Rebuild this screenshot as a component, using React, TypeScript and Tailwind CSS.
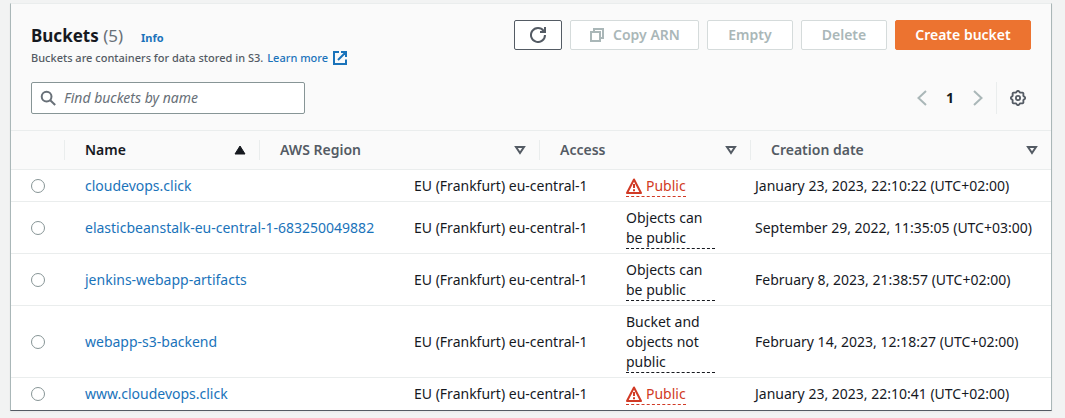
import React from 'react';
import clsx from 'clsx';

type Access = 'Public' | 'Objects can be public' | 'Bucket and objects not public';

interface Bucket {
  name: string;
  region: string;
  access: Access;
  created: string;
}

const FRANKFURT = 'EU (Frankfurt) eu-central-1';

const buckets: Bucket[] = [
  { name: 'cloudevops.click', region: FRANKFURT, access: 'Public', created: 'January 23, 2023, 22:10:22 (UTC+02:00)' },
  { name: 'elasticbeanstalk-eu-central-1-683250049882', region: FRANKFURT, access: 'Objects can be public', created: 'September 29, 2022, 11:35:05 (UTC+03:00)' },
  { name: 'jenkins-webapp-artifacts', region: FRANKFURT, access: 'Objects can be public', created: 'February 8, 2023, 21:38:57 (UTC+02:00)' },
  { name: 'webapp-s3-backend', region: FRANKFURT, access: 'Bucket and objects not public', created: 'February 14, 2023, 12:18:27 (UTC+02:00)' },
  { name: 'www.cloudevops.click', region: FRANKFURT, access: 'Public', created: 'January 23, 2023, 22:10:41 (UTC+02:00)' },
];

const columns = ['Name', 'AWS Region', 'Access', 'Creation date'];

function Icon({ children, className }: { children: React.ReactNode; className?: string }) {
  return (
    <svg viewBox="0 0 16 16" fill="none" stroke="currentColor" strokeWidth="2" aria-hidden="true" className={clsx('shrink-0', className ?? 'size-4')}>
      {children}
    </svg>
  );
}

const RefreshIcon = () => (
  <Icon>
    <path d="M15 8A7 7 0 1 1 13.6 3.8L15 5" />
    <path d="M15 0v5h-5" />
  </Icon>
);

const CopyIcon = () => (
  <Icon>
    <path d="M2 5h9v9H2z" />
    <path d="M5 5V2h9v9h-3" />
  </Icon>
);

const SearchIcon = () => (
  <Icon className="size-4 text-[#687078]">
    <circle cx="6.6" cy="6.6" r="4.9" />
    <path d="m10.2 10.2 5 4.8" />
  </Icon>
);

const ExternalIcon = () => (
  <Icon>
    <path d="M7 2H2v12h12V9.5M9 2h5v5M6 10l8-8" />
  </Icon>
);

const WarningIcon = () => (
  <Icon>
    <path d="M8 1.5 15 15H1Z" strokeLinejoin="round" />
    <path d="M8 6v4M8 11.2v2" />
  </Icon>
);

const gearPath = (() => {
  const points: string[] = [];
  for (let i = 0; i < 64; i++) {
    const angle = (i / 64) * Math.PI * 2;
    const radius = 6.5 + 0.7 * Math.cos(angle * 8);
    points.push(`${(8 + radius * Math.cos(angle)).toFixed(2)} ${(8 + radius * Math.sin(angle)).toFixed(2)}`);
  }
  return `M${points.join('L')}Z`;
})();

const GearIcon = () => (
  <Icon>
    <path d={gearPath} strokeWidth="1.8" />
    <circle cx="8" cy="8" r="2.1" strokeWidth="1.8" />
  </Icon>
);

function SortIcon({ active }: { active: boolean }) {
  return (
    <svg viewBox="0 0 12 10" aria-hidden="true" className="h-[10px] w-3 shrink-0">
      {active ? (
        <path d="M6 1 11 9H1Z" fill="currentColor" stroke="currentColor" strokeLinejoin="round" />
      ) : (
        <path d="M2 2h8L6 8Z" fill="none" stroke="currentColor" strokeWidth="2" />
      )}
    </svg>
  );
}

function Button({ children, variant = 'disabled', label, className }: {
  children: React.ReactNode;
  variant?: 'normal' | 'disabled' | 'primary';
  label?: string;
  className?: string;
}) {
  return (
    <button
      type="button"
      aria-label={label}
      disabled={variant === 'disabled'}
      className={clsx(
        'flex h-[30px] items-center justify-center gap-2 rounded-xs border text-sm leading-5 font-semibold whitespace-nowrap',
        variant === 'normal' && 'border-[#545b64] bg-white text-[#545b64]',
        variant === 'disabled' && 'border-[#d5dbdb] bg-white text-[#aab7b8]',
        variant === 'primary' && 'border-[#ec7330] bg-[#ec7330] text-white',
        className,
      )}
    >
      {children}
    </button>
  );
}

function AccessLabel({ access }: { access: Access }) {
  if (access === 'Public') {
    return (
      <span className="inline-flex items-center gap-1 border-b border-dashed border-[#d13a25] text-[#d13a25]">
        <WarningIcon />
        Public
      </span>
    );
  }
  return <span className="block w-full border-b border-dashed border-[#16191f]">{access}</span>;
}

export default function App() {
  return (
    <div className="bg-[#f2f3f3] px-[10px] pt-[3px] pb-2 font-['Noto_Sans',sans-serif] text-sm leading-5 text-[#16191f]">
      <main className="mr-[3px] border border-t-[#eaeded] border-r-[#aab7b8] border-b-[#545b64] border-l-[#aab7b8] bg-[#fafafa] shadow-xs">
        <header className="px-5 pt-4 pb-4">
          <div className="flex items-start justify-between gap-4">
            <div className="pt-[5px]">
              <div className="flex items-baseline gap-[18px]">
                <h1 className="text-[17px] leading-[22px] font-bold">
                  Buckets <span className="font-normal text-[#687078]">(5)</span>
                </h1>
                <a href="#info" className="text-[11px] font-bold text-[#1a73ba]">Info</a>
              </div>
              <p className="flex items-center gap-1 text-[11px] leading-5 font-medium whitespace-nowrap text-[#545b64]">
                Buckets are containers for data stored in S3.
                <a href="#learn" className="flex items-center gap-1 text-[#1a73ba]">
                  Learn more
                  <ExternalIcon />
                </a>
              </p>
            </div>
            <div className="flex gap-2">
              <Button variant="normal" label="Refresh" className="w-12"><RefreshIcon /></Button>
              <Button className="w-[129px]"><CopyIcon />Copy ARN</Button>
              <Button className="w-[86px]">Empty</Button>
              <Button className="w-[86px]">Delete</Button>
              <Button variant="primary" className="w-[136px]">Create bucket</Button>
            </div>
          </div>
          <div className="mt-[14px] flex items-center justify-between">
            <label className="flex h-8 w-[274px] items-center gap-2 rounded-xs border border-[#879596] bg-white px-2">
              <SearchIcon />
              <input
                type="text"
                aria-label="Find buckets by name"
                placeholder="Find buckets by name"
                className="min-w-0 flex-1 text-sm outline-none placeholder:text-[#687078] placeholder:italic"
              />
            </label>
            <div className="flex h-8 items-center">
              <nav aria-label="Pagination" className="flex items-center">
                <button type="button" aria-label="Previous page" className="flex w-7 justify-center text-[#aab7b8]">
                  <Icon><path d="M12 1 4.5 8l7.5 7" /></Icon>
                </button>
                <button type="button" aria-current="page" className="w-7 text-center font-bold">1</button>
                <button type="button" aria-label="Next page" className="flex w-7 justify-center text-[#aab7b8]">
                  <Icon><path d="m4 1 7.5 7L4 15" /></Icon>
                </button>
              </nav>
              <button type="button" aria-label="Preferences" className="ml-1 flex h-8 items-center border-l border-[#eaeded] pr-[5px] pl-[13px] text-[#545b64]">
                <GearIcon />
              </button>
            </div>
          </div>
        </header>

        <table className="block w-full text-left">
          <thead className="block border-y border-[#eaeded]">
            <tr className="grid grid-cols-[53px_195fr_280fr_211fr_301fr] py-[9px]">
              <th aria-label="Selection" />
              {columns.map((column, i) => (
                <th
                  key={column}
                  aria-sort={i === 0 ? 'ascending' : undefined}
                  className={clsx(
                    'flex items-center justify-between border-l border-[#eaeded] pr-[13px] pl-5 font-semibold',
                    i === 0 ? 'text-[#16191f]' : 'text-[#545b64]',
                  )}
                >
                  {column}
                  <SortIcon active={i === 0} />
                </th>
              ))}
            </tr>
          </thead>
          <tbody className="block bg-white">
            {buckets.map((bucket) => (
              <tr
                key={bucket.name}
                className="grid grid-cols-[54px_329fr_212fr_129fr_316fr] items-center border-b border-[#eaeded] pt-[5px] pb-1 last:border-transparent"
              >
                <td className="flex items-center pl-5">
                  <input
                    type="radio"
                    name="bucket"
                    aria-label={bucket.name}
                    className="size-[14px] appearance-none rounded-full border border-[#879596] bg-white checked:border-4 checked:border-[#0073bb]"
                  />
                </td>
                <td className="pl-5 whitespace-nowrap">
                  <a href={`#${bucket.name}`} className="text-[#1a73ba]">{bucket.name}</a>
                </td>
                <td className="pl-5 whitespace-nowrap">{bucket.region}</td>
                <td className="flex px-5 pt-px"><AccessLabel access={bucket.access} /></td>
                <td className="pl-5 whitespace-nowrap">{bucket.created}</td>
              </tr>
            ))}
          </tbody>
        </table>
      </main>
    </div>
  );
}
